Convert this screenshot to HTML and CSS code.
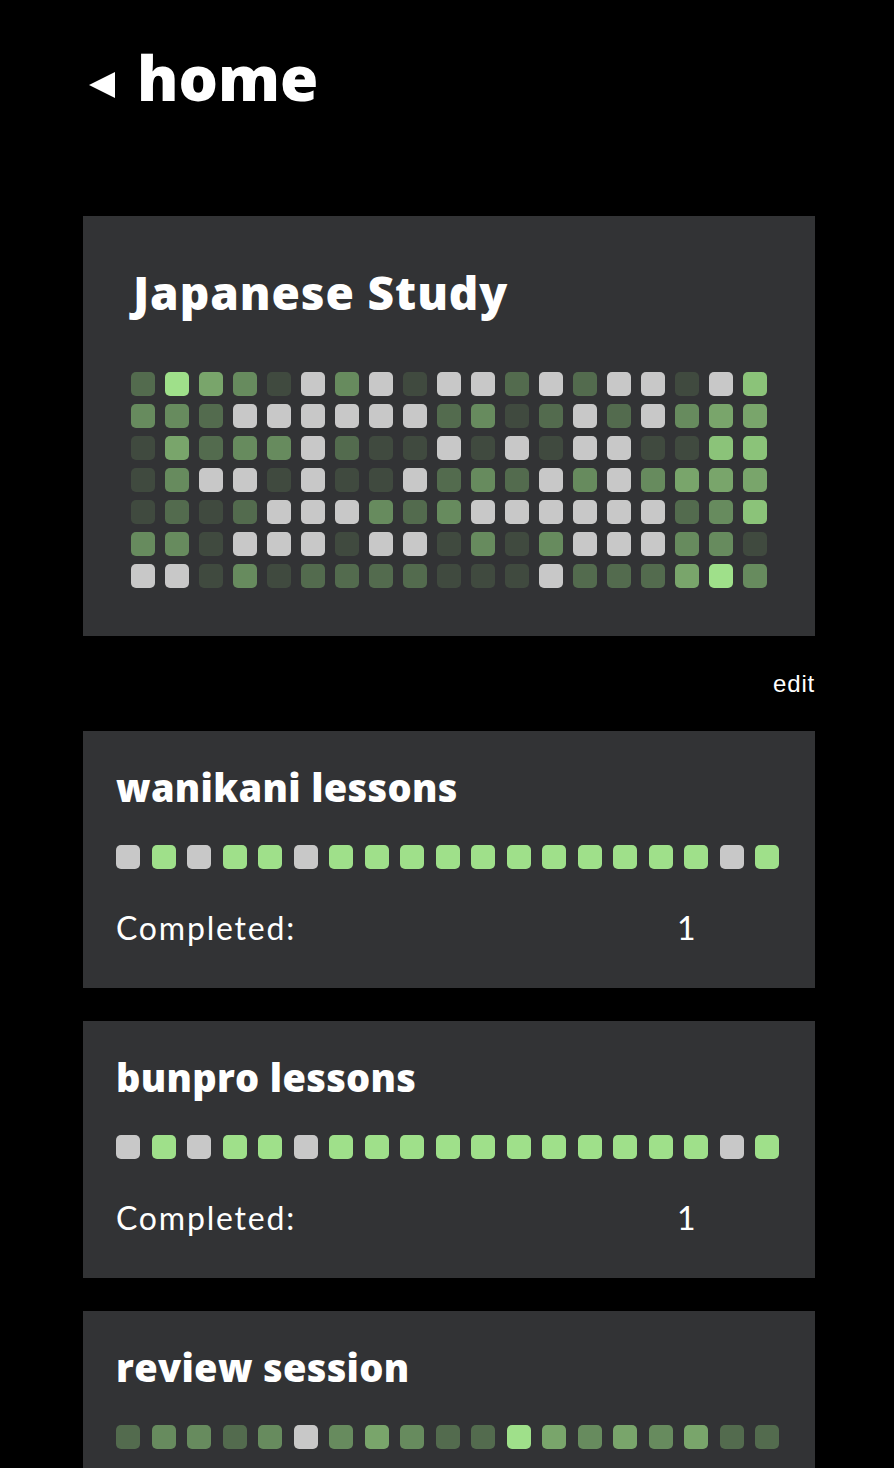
FILE: index.html
```html
<!DOCTYPE html>
<html lang="en">
<head>
    <meta charset="UTF-8">
    <meta name="viewport" content="width=device-width, initial-scale=1.0">
    <title>Japanese Study</title>
    <link rel="stylesheet" href="styles.css">
</head>
<body>
    <div class="page">
        <!-- Back link -->
        <a class="back-link" href="#">
            <span class="back-arrow"></span>
            <span>home</span>
        </a>

        <!-- Goal overview -->
        <div class="goal-card">
            <h2 class="goal-title">Japanese Study</h2>
            <div class="heatmap" id="heatmap"></div>
        </div>

        <div class="edit-row">
            <a href="#" class="edit-link">edit</a>
        </div>

        <!-- Habits -->
        <div class="habit-list" id="habitList"></div>
    </div>

    <script>
        // 0 = missed, 1-6 = intensity
        const heatmap = [
            '2643103010020200105',
            '3320000002312020344',
            '1423302110101001155',
            '1300101102320303444',
            '1212000323000000235',
            '3310001001313000331',
            '0013122221110222463'
        ];

        const habits = [
            { name: 'wanikani lessons', days: '0606606666666666606', completed: 1 },
            { name: 'bunpro lessons', days: '0606606666666666606', completed: 1 },
            { name: 'review session', days: '2332303432264343422', completed: 1 }
        ];

        function cell(level) {
            return '<div class="day l' + level + '"></div>';
        }

        document.getElementById('heatmap').innerHTML = heatmap
            .map(row => row.split('').map(cell).join(''))
            .join('');

        document.getElementById('habitList').innerHTML = habits.map(h => `
            <div class="habit-card">
                <h3 class="habit-title">${h.name}</h3>
                <div class="habit-days">${h.days.split('').map(cell).join('')}</div>
                <div class="stat-row">
                    <span>Completed:</span>
                    <span class="stat-value">${h.completed}</span>
                </div>
            </div>
        `).join('');
    </script>
</body>
</html>
```

FILE: styles.css
```css
:root {
    --bg: #000000;
    --card: #323335;
    --text: #ffffff;
    --missed: #c8c8c8;
    --l1: #404a3f;
    --l2: #536b4e;
    --l3: #678b5e;
    --l4: #79a56b;
    --l5: #8bc379;
    --l6: #9fe08a;
    --heading: 'Open Sans', 'Lato', sans-serif;
}

body {
    background: var(--bg);
    color: var(--text);
    font-family: 'Lato', 'Noto Sans', sans-serif;
    margin: 0;
}

.page {
    padding: 39px 79px 40px 83px;
}

.back-link {
    display: flex;
    align-items: center;
    gap: 22px;
    padding-left: 6px;
    margin-bottom: 101px;
    color: var(--text);
    text-decoration: none;
    font-family: var(--heading);
    font-size: 62px;
    font-weight: 800;
    line-height: 76px;
}

.back-arrow {
    width: 0;
    height: 0;
    margin-top: 16px;
    border-top: 13px solid transparent;
    border-bottom: 13px solid transparent;
    border-right: 26px solid var(--text);
}

.goal-card {
    background: var(--card);
    padding: 48px;
}

.goal-title {
    margin: 0 0 52px 2px;
    font-family: var(--heading);
    font-size: 46px;
    font-weight: 800;
    line-height: 56px;
    letter-spacing: 0.9px;
}

.heatmap {
    display: grid;
    grid-template-columns: repeat(19, 24px);
    column-gap: 10px;
    row-gap: 8px;
}

.day {
    height: 24px;
    border-radius: 5px;
    background: var(--missed);
}

.day.l1 { background: var(--l1); }
.day.l2 { background: var(--l2); }
.day.l3 { background: var(--l3); }
.day.l4 { background: var(--l4); }
.day.l5 { background: var(--l5); }
.day.l6 { background: var(--l6); }

.edit-row {
    display: flex;
    justify-content: flex-end;
    margin: 35px 0 34px;
    line-height: 26px;
}

.edit-link {
    color: var(--text);
    text-decoration: none;
    font-family: 'Liberation Sans', Arial, sans-serif;
    font-size: 24px;
    letter-spacing: 0.8px;
}

.habit-list {
    display: flex;
    flex-direction: column;
    gap: 33px;
}

.habit-card {
    background: var(--card);
    padding: 34px 32px 42px 33px;
}

.habit-title {
    margin: 0 0 36px;
    font-family: var(--heading);
    font-size: 38px;
    font-weight: 800;
    line-height: 44px;
    letter-spacing: 0.3px;
}

.habit-days {
    display: grid;
    grid-template-columns: repeat(19, 24px);
    column-gap: 11.5px;
}

.stat-row {
    display: flex;
    justify-content: space-between;
    margin-top: 41px;
    font-size: 32px;
    line-height: 36px;
    letter-spacing: 1.8px;
}

.stat-value {
    width: 106px;
}
```
